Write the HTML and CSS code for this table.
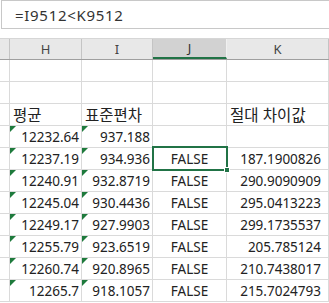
FILE: index.html
```html
<!DOCTYPE html>
<html lang="ko">
<head>
<meta charset="utf-8">
<link rel="stylesheet" href="styles.css">
</head>
<body>
<div class="formula-bar"><span class="formula">=I9512&lt;K9512</span></div>
<div class="gap"></div>
<div class="col-headers">
  <div class="ch"></div>
  <div class="ch">H</div>
  <div class="ch">I</div>
  <div class="ch sel">J</div>
  <div class="ch">K</div>
  <div class="ch"></div>
</div>
<div class="sheet">
  <div class="c"></div><div class="c"></div><div class="c"></div><div class="c"></div><div class="c"></div><div class="c"></div>
  <div class="c"></div><div class="c"></div><div class="c"></div><div class="c"></div><div class="c"></div><div class="c"></div>
  <div class="c"></div><div class="c txt">평균</div><div class="c txt">표준편차</div><div class="c"></div><div class="c txt">절대 차이값</div><div class="c"></div>

  <div class="c"></div><div class="c num tri">12232.64</div><div class="c num tri">937.188</div><div class="c"></div><div class="c"></div><div class="c"></div>
  <div class="c"></div><div class="c num tri">12237.19</div><div class="c num tri">934.936</div><div class="c bool active">FALSE<span class="selbox"><span class="handle"></span></span></div><div class="c num k">187.1900826</div><div class="c"></div>
  <div class="c"></div><div class="c num tri">12240.91</div><div class="c num tri">932.8719</div><div class="c bool">FALSE</div><div class="c num k">290.9090909</div><div class="c"></div>
  <div class="c"></div><div class="c num tri">12245.04</div><div class="c num tri">930.4436</div><div class="c bool">FALSE</div><div class="c num k">295.0413223</div><div class="c"></div>
  <div class="c"></div><div class="c num tri">12249.17</div><div class="c num tri">927.9903</div><div class="c bool">FALSE</div><div class="c num k">299.1735537</div><div class="c"></div>
  <div class="c"></div><div class="c num tri">12255.79</div><div class="c num tri">923.6519</div><div class="c bool">FALSE</div><div class="c num k">205.785124</div><div class="c"></div>
  <div class="c"></div><div class="c num tri">12260.74</div><div class="c num tri">920.8965</div><div class="c bool">FALSE</div><div class="c num k">210.7438017</div><div class="c"></div>
  <div class="c"></div><div class="c num tri">12265.7</div><div class="c num tri">918.1057</div><div class="c bool">FALSE</div><div class="c num k">215.7024793</div><div class="c"></div>
</div>
</body>
</html>
```
FILE: styles.css
```css
* { box-sizing: border-box; }
html, body {
  margin: 0;
  padding: 0;
  background: #ffffff;
  overflow: hidden;
}
body {
  width: 329px;
  height: 303px;
  font-family: "Noto Sans", "Open Sans", "Noto Sans CJK KR", sans-serif;
  color: #222222;
}
.formula-bar {
  height: 29px;
  margin-left: 1px;
  border: 1px solid #c8c8c8;
  border-right: none;
  display: flex;
  align-items: center;
  padding-left: 13px;
  background: #ffffff;
}
.formula {
  font-size: 15px;
  color: #333333;
  letter-spacing: 0.7px;
}
.gap { height: 9px; }
.col-headers,
.sheet {
  display: grid;
  grid-template-columns: 10px 72px 71px 74px 102px 1fr;
}
.col-headers {
  height: 22px;
  border-top: 1px solid #d6d6d6;
  border-bottom: 1px solid #9f9f9f;
  background: #e8e8e8;
}
.ch {
  border-right: 1px solid #c4c4c4;
  display: flex;
  align-items: center;
  justify-content: center;
  font-size: 13px;
  color: #444444;
}
.ch.sel {
  background: #d2d2d2;
  border-bottom: 2px solid #217346;
  border-right-color: #f0f0f0;
  color: #333333;
}
.sheet {
  grid-auto-rows: 22px;
}
.c {
  position: relative;
  border-right: 1px solid #dadada;
  border-bottom: 1px solid #dadada;
  font-size: 13.5px;
  line-height: 18px;
  display: flex;
  align-items: flex-end;
  padding-bottom: 1px;
  white-space: nowrap;
}
.txt {
  justify-content: flex-start;
  padding-left: 3px;
  font-family: "Noto Sans CJK KR", "Noto Sans", sans-serif;
  font-size: 15.5px;
  line-height: 19px;
  padding-bottom: 1px;
}
.num {
  justify-content: flex-end;
  padding-right: 2px;
}
.num.k { padding-right: 7px; }
.bool { justify-content: center; }
.tri::before {
  content: "";
  position: absolute;
  top: 0;
  left: 0;
  width: 0;
  height: 0;
  border-top: 6px solid #1e7a3c;
  border-right: 6px solid transparent;
}
.selbox {
  position: absolute;
  top: -2px;
  left: -1px;
  right: -2px;
  bottom: -2px;
  border: 2px solid #217346;
  z-index: 2;
}
.handle {
  position: absolute;
  right: -4px;
  bottom: -4px;
  width: 6px;
  height: 6px;
  background: #217346;
  border: 1px solid #ffffff;
}
```
